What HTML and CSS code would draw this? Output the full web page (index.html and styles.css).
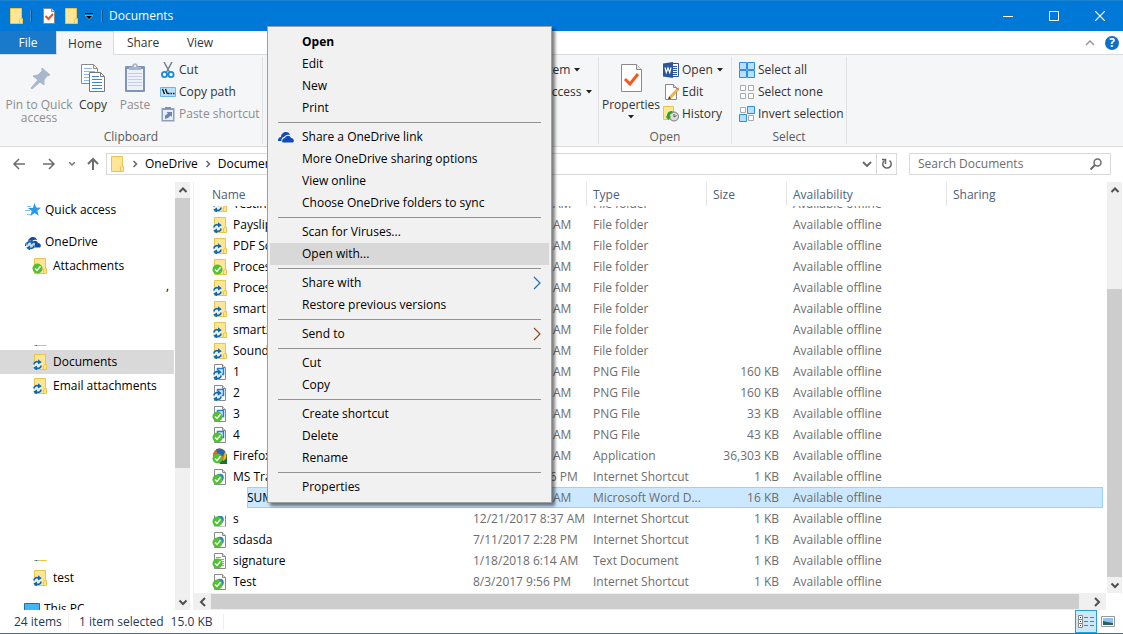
FILE: index.html
```
<!DOCTYPE html>
<html lang="en">
<head>
    <meta charset="UTF-8">
    <meta name="viewport" content="width=device-width, initial-scale=1.0">
    <title>Documents</title>
    <link rel="stylesheet" href="styles.css">
</head>
<body>
    <!-- Shared icons -->
    <svg class="sprite" aria-hidden="true">
        <symbol id="folder" viewBox="0 0 16 16">
            <path d="M2.5.5h11v10h1v5h-12z" fill="#ffe596" stroke="#ebc54b"/>
            <path d="M11.5 15.5v-4l2-1.5" fill="none" stroke="#ebc54b"/>
        </symbol>
        <symbol id="page" viewBox="0 0 16 16">
            <path d="M2.5.5h8l3 3v12h-11z" fill="#fff" stroke="#8a8a8a"/>
            <path d="M10.5.5v3h3" fill="#ddd" stroke="#8a8a8a"/>
        </symbol>
        <symbol id="sync" viewBox="0 0 16 16">
            <circle cx="5.500" cy="11" r="4.600" fill="#e9f2f8" opacity=".8"/>
            <path d="M2 10.500c0-2.500 2.500-3.500 4.500-2.500M9 11.500c0 2.500-2.500 3.500-4.500 2.500" fill="none" stroke="#1268ad" stroke-width="1.700"/>
            <path d="M6 5.300l3.800 2.900L6 10.600zM5 11.400v5.300L1.200 13.800z" fill="#1268ad"/>
        </symbol>
        <symbol id="check" viewBox="0 0 16 16">
            <circle cx="5.500" cy="10.500" r="5" fill="#4fc22f"/>
            <path d="M3 10.500l2 2 3.500-4.200" fill="none" stroke="#fff" stroke-width="1.500"/>
        </symbol>
        <symbol id="folder-sync" viewBox="0 0 16 16"><use href="#folder"/><use href="#sync"/></symbol>
        <symbol id="folder-check" viewBox="0 0 16 16"><use href="#folder"/><use href="#check"/></symbol>
        <symbol id="png" viewBox="0 0 16 16">
            <use href="#page"/>
            <path d="M5.500 4.500h6v6h-6z" fill="#d5ebfb" stroke="#1f7fd1" stroke-width="1.500"/>
        </symbol>
        <symbol id="png-sync" viewBox="0 0 16 16"><use href="#png"/><use href="#sync"/></symbol>
        <symbol id="png-check" viewBox="0 0 16 16"><use href="#png"/><use href="#check"/></symbol>
        <symbol id="url-check" viewBox="0 0 16 16">
            <use href="#page"/>
            <circle cx="8" cy="8.500" r="3.800" fill="#2d7fc8"/>
            <use href="#check"/>
        </symbol>
        <symbol id="txt-check" viewBox="0 0 16 16">
            <use href="#page"/>
            <path d="M4 4.500h5M4 6.500h8M4 8.500h8M4 10.500h8M4 12.500h8" stroke="#9a9a9a"/>
            <use href="#check"/>
        </symbol>
        <symbol id="firefox-check" viewBox="0 0 16 16">
            <path d="M1 7l14-1v10H8z" fill="#14723a"/>
            <circle cx="7.500" cy="7" r="6.500" fill="#e8641b"/>
            <path d="M4 1.500c3-2 8-1 9.500 2.500L11 8 6 7z" fill="#2468b0"/>
            <path d="M13 3c3 4 1 9-2 10l1-5z" fill="#f6b726"/>
            <use href="#check"/>
        </symbol>
        <symbol id="cloud" viewBox="0 0 16 12">
            <path d="M0 10C-.2 7.500 1.500 6 3 6 3 3 5.500 1 8 1c2 0 3.500 1 4 3-3-1-5 .3-6 2-2 .2-3 2-2.500 4z" fill="#0e4bb3"/>
            <path d="M4.500 11.500c-1-2 .3-4.500 2.500-4.500 1-3 5-3 6 0 3 0 3.500 3.500 2 4.500z" fill="#0e4bb3"/>
        </symbol>
        <symbol id="arrow" viewBox="0 0 8 8"><path d="M2.500 1l3 3-3 3" fill="none" stroke="#666" stroke-width="1.500"/></symbol>
        <symbol id="scroll-up" viewBox="0 0 16 16"><path d="M4.500 10L8 6.500l3.500 3.500" fill="none" stroke="#505050" stroke-width="2"/></symbol>
        <symbol id="scroll-down" viewBox="0 0 16 16"><path d="M4.500 6.500L8 10l3.500-3.500" fill="none" stroke="#505050" stroke-width="2"/></symbol>
        <symbol id="caret" viewBox="0 0 6 4"><path d="M0 0h6L3 3.500z" fill="#222"/></symbol>
    </svg>

    <header class="titlebar">
        <svg class="icon"><use href="#folder"/></svg>
        <span class="divider"></span>
        <button class="quick" aria-label="Properties">
            <svg class="icon" viewBox="0 0 16 16"><use href="#page"/><path d="M4.500 8l3 3 4.500-5" fill="none" stroke="#e8531a" stroke-width="2"/></svg>
        </button>
        <button class="quick" aria-label="New folder"><svg class="icon"><use href="#folder"/></svg></button>
        <button class="quick customize" aria-label="Customize toolbar">
            <svg width="8" height="7" viewBox="0 0 8 7"><path d="M0 .5h8" stroke="#000"/><path d="M0 2.500h8L4 6.500z" fill="#000" stroke="#fff" stroke-width=".5"/></svg>
        </button>
        <span class="divider"></span>
        <h1>Documents</h1>
        <div class="window-buttons">
            <button aria-label="Minimize"><svg width="10" height="10"><path d="M0 5.500h10" stroke="#fff"/></svg></button>
            <button aria-label="Maximize"><svg width="10" height="10"><path d="M.5.5h9v9h-9z" fill="none" stroke="#fff"/></svg></button>
            <button aria-label="Close"><svg width="10" height="10"><path d="M0 0l10 10M10 0L0 10" stroke="#fff" stroke-width="1.200"/></svg></button>
        </div>
    </header>

    <nav class="tabs">
        <button class="tab file">File</button>
        <button class="tab active">Home</button>
        <button class="tab share">Share</button>
        <button class="tab">View</button>
        <div class="help">
            <button aria-label="Collapse the ribbon"><svg width="10" height="6"><path d="M1 5l4-4 4 4" fill="none" stroke="#9a9a9a" stroke-width="1.500"/></svg></button>
            <button class="help-button" aria-label="Help">?</button>
        </div>
    </nav>

    <section class="ribbon">
        <div class="group clipboard">
            <div class="commands">
                <button class="big pin" disabled>
                    <svg width="32" height="32" viewBox="0 0 32 32"><path d="M19 6l8 7-3 1-3 4v5l-4-3-8 7-1-1 7-8-5-4 5-1 4-4z" fill="#a9b7cd" stroke="#a9b7cd"/></svg>
                    <span>Pin to Quick<br>access</span>
                </button>
                <button class="big">
                    <svg width="32" height="32" viewBox="0 0 32 32">
                        <path d="M4.500 2.500h12l4 4v15h-16z" fill="#fff" stroke="#8a8a8a"/>
                        <path d="M16.500 2.500v4h4" fill="none" stroke="#8a8a8a"/>
                        <path d="M7 6.500h8M7 9.500h11M7 12.500h8M7 15.500h8M7 18.500h8" stroke="#8cb6ef"/>
                        <path d="M12.500 10.500h11l4 4v15h-15z" fill="#fff" stroke="#777"/>
                        <path d="M23.500 10.500v4h4" fill="none" stroke="#777"/>
                        <path d="M15 14.500h7M15 17.500h10M15 20.500h10M15 23.500h10M15 26.500h10" stroke="#3c83e0"/>
                    </svg>
                    <span>Copy</span>
                </button>
                <button class="big" disabled>
                    <svg width="32" height="32" viewBox="0 0 32 32">
                        <rect x="6" y="4" width="20" height="26" rx="1" fill="#8094b8"/>
                        <path d="M8 7h16v21H8z" fill="#edf2fa"/>
                        <path d="M9 11.500h14M9 14.500h14M9 17.500h14M9 20.500h14M9 23.500h14" stroke="#c5cfe1"/>
                        <path d="M10 8V5h3c0-5 6-5 6 0h3v3z" fill="#a9b4c9"/><circle cx="16" cy="4" r="1" fill="#fff"/>
                    </svg>
                    <span>Paste</span>
                </button>
                <div class="column">
                    <button class="small">
                        <svg class="icon" viewBox="0 0 16 16">
                            <path d="M4 0l6 11M12 0L6 11" stroke="#73808c" stroke-width="1.500"/>
                            <circle cx="4.500" cy="12.500" r="2.600" fill="none" stroke="#1c8ad0" stroke-width="1.800"/>
                            <circle cx="11" cy="12.500" r="2.600" fill="none" stroke="#1c8ad0" stroke-width="1.800"/>
                        </svg>Cut
                    </button>
                    <button class="small">
                        <svg class="icon" viewBox="0 0 16 16">
                            <path d="M.5 3.500h15v9H.5z" fill="#b9e0fa" stroke="#6fb4e4"/>
                            <path d="M2.500 5l2 5M5.500 5l2 5" stroke="#111" stroke-width="1.300"/><path d="M8 9.500h1.500M10.500 9.500H12M13 9.500h1.500" stroke="#111" stroke-width="1.300"/>
                        </svg>Copy path
                    </button>
                    <button class="small" disabled>
                        <svg class="icon" viewBox="0 0 16 16">
                            <path d="M1.500 2h13v13.500h-13z" fill="#8ea0c0"/><path d="M3 4h10v10H3z" fill="#e6edf8"/>
                            <path d="M5 3V1h6v2z" fill="#7f90b0"/><path d="M5 13V9.500l3-2L6.500 6H12v5l-1.500-1.500L8 12z" fill="#6f84ad"/>
                        </svg>Paste shortcut
                    </button>
                </div>
            </div>
            <h2>Clipboard</h2>
        </div>
        <div class="group new">
            <div class="commands">
                <div class="column">
                    <button class="small">New item <svg class="caret"><use href="#caret"/></svg></button>
                    <button class="small">Easy access <svg class="caret"><use href="#caret"/></svg></button>
                </div>
            </div>
            <h2>New</h2>
        </div>
        <div class="group open">
            <div class="commands">
                <button class="big">
                    <svg width="32" height="32" viewBox="0 0 32 32">
                        <path d="M6.500 2.500h15l5 5v22h-20z" fill="#fff" stroke="#8a8a8a"/><path d="M21.500 2.500v5h5" fill="#e8e8e8" stroke="#8a8a8a"/>
                        <path d="M10 17l5 5 8-10" fill="none" stroke="#f1591d" stroke-width="3"/>
                    </svg>
                    <span>Properties</span>
                    <svg class="caret"><use href="#caret"/></svg>
                </button>
                <div class="column">
                    <button class="small">
                        <svg class="icon" viewBox="0 0 16 16">
                            <path d="M8.500 1.500h7v13h-7z" fill="#fff" stroke="#2b579a"/><path d="M10 4.500h4M10 6.500h4M10 8.500h4M10 10.500h4M10 12.500h4" stroke="#2b579a"/>
                            <path d="M0 1.500L10 0v16L0 14.500z" fill="#2b579a"/><path d="M2 5.500l1.300 5L5 6l1.700 4.500L8 5.500" fill="none" stroke="#fff" stroke-width="1.200"/>
                        </svg>Open <svg class="caret"><use href="#caret"/></svg>
                    </button>
                    <button class="small">
                        <svg class="icon" viewBox="0 0 16 16">
                            <use href="#page"/><path d="M6 13L14 4.500l1.500 1.500L8 14.500z" fill="#f4b93f" stroke="#d48a20" stroke-width=".5"/><path d="M6 12.500L5 15.500l3-1z" fill="#333"/><path d="M14 4.500l1-1L16 5l-.5 1z" fill="#d9534a"/>
                        </svg>Edit
                    </button>
                    <button class="small">
                        <svg class="icon" viewBox="0 0 16 16">
                            <path d="M.5.5h10v13H.5z" fill="#ffe596" stroke="#ebc54b"/><circle cx="11" cy="10.500" r="4.500" fill="#ddd" stroke="#777"/>
                            <path d="M11 8v3l2.500-1.500" fill="none" stroke="#555"/><path d="M9.500 6C6 6 5 8.500 5 11" fill="none" stroke="#29a329" stroke-width="2.500"/><path d="M2.500 10.500h5.500L5.500 14z" fill="#29a329"/>
                        </svg>History
                    </button>
                </div>
            </div>
            <h2>Open</h2>
        </div>
        <div class="group select">
            <div class="commands">
                <div class="column">
                    <button class="small">
                        <svg class="icon" viewBox="0 0 16 16"><path d="M.5.5h7v7h-7zM8.500.5h7v7h-7zM.5 8.500h7v7h-7zM8.500 8.500h7v7h-7z" fill="#b8dffa" stroke="#2d8fdd"/></svg>Select all
                    </button>
                    <button class="small">
                        <svg class="icon" viewBox="0 0 16 16"><path d="M1.500 1.500h5v5h-5zM9.500 1.500h5v5h-5zM1.500 9.500h5v5h-5zM9.500 9.500h5v5h-5z" fill="#fff" stroke="#aaa"/></svg>Select none
                    </button>
                    <button class="small">
                        <svg class="icon" viewBox="0 0 16 16"><path d="M1.500 1.500h5v5h-5zM9.500 9.500h5v5h-5z" fill="#fff" stroke="#aaa"/><path d="M8.500.5h7v7h-7zM.5 8.500h7v7h-7z" fill="#b8dffa" stroke="#2d8fdd"/></svg>Invert selection
                    </button>
                </div>
            </div>
            <h2>Select</h2>
        </div>
    </section>

    <section class="location">
        <div class="history">
            <button aria-label="Back"><svg width="14" height="12"><path d="M13 6H2M7 1L2 6l5 5" fill="none" stroke="#6d6d6d" stroke-width="1.500"/></svg></button>
            <button aria-label="Forward"><svg width="14" height="12"><path d="M1 6h11M7 1l5 5-5 5" fill="none" stroke="#6d6d6d" stroke-width="1.500"/></svg></button>
            <button aria-label="Recent locations"><svg width="6" height="4"><path d="M0 0l3 3 3-3" fill="none" stroke="#777" stroke-width="1.500"/></svg></button>
            <button aria-label="Up"><svg width="12" height="13"><path d="M6 13V2M1 7l5-5 5 5" fill="none" stroke="#6d6d6d" stroke-width="2"/></svg></button>
        </div>
        <div class="address">
            <svg class="icon"><use href="#folder"/></svg>
            <svg class="crumb"><use href="#arrow"/></svg>
            <a href="#">OneDrive</a>
            <svg class="crumb"><use href="#arrow"/></svg>
            <a href="#">Documents</a>
            <button class="previous" aria-label="Previous locations"><svg width="10" height="6"><path d="M1 1l4 4 4-4" fill="none" stroke="#6d6d6d" stroke-width="2"/></svg></button>
            <button class="refresh" aria-label="Refresh"><svg width="12" height="12" viewBox="0 0 12 12"><path d="M8.500 2.500a4.200 4.200 0 1 1-5 0" fill="none" stroke="#666" stroke-width="1.500"/><path d="M1 1.500h3.500V6" fill="none" stroke="#666" stroke-width="1.500"/></svg></button>
        </div>
        <label class="search">
            <input type="text" placeholder="Search Documents" aria-label="Search Documents">
            <svg width="12" height="12"><circle cx="7.500" cy="4.500" r="3.500" fill="none" stroke="#6d6d6d" stroke-width="1.500"/><path d="M5 7L.5 11.500" stroke="#6d6d6d" stroke-width="2"/></svg>
        </label>
    </section>

    <main class="content">
        <aside class="sidebar">
            <div class="tree">
                <a href="#" class="node"><svg class="icon" viewBox="0 0 16 16"><path d="M9.500 1l1.700 4.500 4.800.3-3.700 3 1.400 5-4.200-2.700L5.500 14l1.200-5-3.700-3h4.800z" fill="#2a9ae6"/><path d="M2 4.500h4M0 8.500h5M2 12.500h4" stroke="#7ec3f0"/></svg>Quick access</a>
                <a href="#" class="node onedrive"><svg class="icon" viewBox="0 0 16 16"><svg y="2" width="16" height="12"><use href="#cloud"/></svg><use href="#sync"/></svg>OneDrive</a>
                <a href="#" class="node child"><svg class="icon"><use href="#folder-check"/></svg>Attachments</a>
                <div class="blank upper"><span class="mark">,</span><svg class="icon"><use href="#folder-sync"/></svg></div>
                <a href="#" class="node child current"><svg class="icon"><use href="#folder-sync"/></svg>Documents</a>
                <a href="#" class="node child"><svg class="icon"><use href="#folder-sync"/></svg>Email attachments</a>
                <div class="blank lower"><svg class="icon"><use href="#folder-sync"/></svg></div>
                <a href="#" class="node child"><svg class="icon"><use href="#folder-sync"/></svg>test</a>
                <a href="#" class="node pc"><svg class="icon" viewBox="0 0 16 16"><path d="M.5 2.500h15v10H.5z" fill="#43b6f5" stroke="#2b6f9c"/><path d="M4 15.500h8" stroke="#777"/></svg>This PC</a>
            </div>
            <div class="scrollbar">
                <svg class="icon"><use href="#scroll-up"/></svg>
                <div class="thumb tree-thumb"></div>
                <svg class="icon end"><use href="#scroll-down"/></svg>
            </div>
        </aside>

        <section class="files">
            <div class="list">
                <table>
                    <thead>
                        <tr><th>Name</th><th>Date modified</th><th>Type</th><th>Size</th><th>Availability</th><th>Sharing</th></tr>
                    </thead>
                    <tbody>
                        <tr><td><svg class="icon"><use href="#folder-sync"/></svg>Testing</td><td>8/3/2017 9:56 AM</td><td>File folder</td><td></td><td>Available offline</td><td></td></tr>
                        <tr><td><svg class="icon"><use href="#folder-sync"/></svg>Payslips</td><td>8/3/2017 9:56 AM</td><td>File folder</td><td></td><td>Available offline</td><td></td></tr>
                        <tr><td><svg class="icon"><use href="#folder-sync"/></svg>PDF Scans</td><td>8/3/2017 9:56 AM</td><td>File folder</td><td></td><td>Available offline</td><td></td></tr>
                        <tr><td><svg class="icon"><use href="#folder-check"/></svg>Process</td><td>8/3/2017 9:56 AM</td><td>File folder</td><td></td><td>Available offline</td><td></td></tr>
                        <tr><td><svg class="icon"><use href="#folder-sync"/></svg>Processes</td><td>8/3/2017 9:56 AM</td><td>File folder</td><td></td><td>Available offline</td><td></td></tr>
                        <tr><td><svg class="icon"><use href="#folder-sync"/></svg>smart1</td><td>8/3/2017 9:56 AM</td><td>File folder</td><td></td><td>Available offline</td><td></td></tr>
                        <tr><td><svg class="icon"><use href="#folder-sync"/></svg>smart2</td><td>8/3/2017 9:56 AM</td><td>File folder</td><td></td><td>Available offline</td><td></td></tr>
                        <tr><td><svg class="icon"><use href="#folder-sync"/></svg>Sounds</td><td>8/3/2017 9:56 AM</td><td>File folder</td><td></td><td>Available offline</td><td></td></tr>
                        <tr><td><svg class="icon"><use href="#png-sync"/></svg>1</td><td>8/3/2017 9:56 AM</td><td>PNG File</td><td>160 KB</td><td>Available offline</td><td></td></tr>
                        <tr><td><svg class="icon"><use href="#png-sync"/></svg>2</td><td>8/3/2017 9:56 AM</td><td>PNG File</td><td>160 KB</td><td>Available offline</td><td></td></tr>
                        <tr><td><svg class="icon"><use href="#png-check"/></svg>3</td><td>8/3/2017 9:56 AM</td><td>PNG File</td><td>33 KB</td><td>Available offline</td><td></td></tr>
                        <tr><td><svg class="icon"><use href="#png-check"/></svg>4</td><td>8/3/2017 9:56 AM</td><td>PNG File</td><td>43 KB</td><td>Available offline</td><td></td></tr>
                        <tr><td><svg class="icon"><use href="#firefox-check"/></svg>Firefox</td><td>8/3/2017 9:56 AM</td><td>Application</td><td>36,303 KB</td><td>Available offline</td><td></td></tr>
                        <tr><td><svg class="icon"><use href="#url-check"/></svg>MS Training</td><td>7/11/2017 2:26 PM</td><td>Internet Shortcut</td><td>1 KB</td><td>Available offline</td><td></td></tr>
                        <tr class="selected"><td>SUMMARY</td><td>8/3/2017 9:56 AM</td><td>Microsoft Word D...</td><td>16 KB</td><td>Available offline</td><td></td></tr>
                        <tr><td><svg class="icon cut"><use href="#url-check"/></svg>s</td><td>12/21/2017 8:37 AM</td><td>Internet Shortcut</td><td>1 KB</td><td>Available offline</td><td></td></tr>
                        <tr><td><svg class="icon"><use href="#url-check"/></svg>sdasda</td><td>7/11/2017 2:28 PM</td><td>Internet Shortcut</td><td>1 KB</td><td>Available offline</td><td></td></tr>
                        <tr><td><svg class="icon"><use href="#txt-check"/></svg>signature</td><td>1/18/2018 6:14 AM</td><td>Text Document</td><td>1 KB</td><td>Available offline</td><td></td></tr>
                        <tr><td><svg class="icon"><use href="#url-check"/></svg>Test</td><td>8/3/2017 9:56 PM</td><td>Internet Shortcut</td><td>1 KB</td><td>Available offline</td><td></td></tr>
                    </tbody>
                </table>
                <div class="scrollbar">
                    <svg class="icon"><use href="#scroll-up"/></svg>
                    <div class="thumb list-thumb"></div>
                    <svg class="icon"><use href="#scroll-down"/></svg>
                </div>
            </div>
            <div class="scrollbar-x">
                <svg class="icon" viewBox="0 0 16 16"><path d="M10 4L6 8l4 4" fill="none" stroke="#505050" stroke-width="2"/></svg>
                <div class="thumb"></div>
                <svg class="icon" viewBox="0 0 16 16"><path d="M6 4l4 4-4 4" fill="none" stroke="#505050" stroke-width="2"/></svg>
            </div>
        </section>
    </main>

    <footer class="status">
        <span class="count">24 items</span>
        <span class="selection">1 item selected</span>
        <span class="size">15.0 KB</span>
        <div class="views">
            <button class="on" aria-label="Details"><svg width="17" height="14"><path d="M.5.5h4v4h-4zM.5 4.500h4v4h-4zM.5 8.500h4v4h-4z" fill="#fff" stroke="#888"/><path d="M2 2.500h1M2 6.500h1M2 10.500h1" stroke="#333"/><path d="M6 2.500h4M12 2.500h4M6 6.500h4M12 6.500h4M6 10.500h4M12 10.500h4" stroke="#777"/></svg></button>
            <button aria-label="Large thumbnails"><svg width="14" height="11"><path d="M.5.500h13v10H.5z" fill="#fff" stroke="#999"/><path d="M2 2h10v7H2z" fill="#8fc4f5"/><path d="M2 5l4 1 6 1v2H2z" fill="#2f5e62"/></svg></button>
        </div>
    </footer>

    <div class="menu" role="menu">
        <button role="menuitem" class="default">Open</button>
        <button role="menuitem">Edit</button>
        <button role="menuitem">New</button>
        <button role="menuitem">Print</button>
        <hr>
        <button role="menuitem" class="with-icon"><svg width="16" height="12"><use href="#cloud"/></svg>Share a OneDrive link</button>
        <button role="menuitem">More OneDrive sharing options</button>
        <button role="menuitem">View online</button>
        <button role="menuitem">Choose OneDrive folders to sync</button>
        <hr>
        <button role="menuitem">Scan for Viruses...</button>
        <button role="menuitem" class="hover">Open with...</button>
        <hr>
        <button role="menuitem">Share with<svg class="sub" viewBox="0 0 8 14"><path d="M1 1l6 6-6 6" fill="none" stroke="#1d6fb8" stroke-width="1.200"/></svg></button>
        <button role="menuitem">Restore previous versions</button>
        <hr>
        <button role="menuitem">Send to<svg class="sub" viewBox="0 0 8 14"><path d="M1 1l6 6-6 6" fill="none" stroke="#9a4a1c" stroke-width="1.200"/></svg></button>
        <hr>
        <button role="menuitem">Cut</button>
        <button role="menuitem">Copy</button>
        <hr>
        <button role="menuitem">Create shortcut</button>
        <button role="menuitem">Delete</button>
        <button role="menuitem">Rename</button>
        <hr>
        <button role="menuitem">Properties</button>
    </div>
</body>
</html>
```
FILE: styles.css
```
* {
    box-sizing: border-box;
}

body {
    margin: 0;
    height: 100vh;
    display: flex;
    flex-direction: column;
    overflow: hidden;
    position: relative;
    background: #fff;
    color: #000;
    font-family: "Open Sans", "Noto Sans", sans-serif;
    font-size: 12px;
    line-height: 16px;
    border-bottom: 1px solid #1979ca;
}

button, input {
    font: inherit;
    color: inherit;
    background: none;
    border: 0;
    padding: 0;
    margin: 0;
}

a {
    color: inherit;
    text-decoration: none;
}

h1, h2 {
    margin: 0;
    font-size: 12px;
    font-weight: normal;
}

svg {
    display: block;
    flex-shrink: 0;
}

.sprite {
    position: absolute;
    width: 0;
    height: 0;
}

.icon {
    width: 16px;
    height: 16px;
}

.caret {
    width: 6px;
    height: 4px;
}

/* Title bar */
.titlebar {
    height: 31px;
    display: flex;
    align-items: center;
    padding-left: 8px;
    background: #0078d7;
    border-top: 1px solid #1881d2;
    color: #fff;
}

.titlebar .divider {
    width: 2px;
    height: 12px;
    margin-left: 6px;
    border-left: 1px solid #4d8fc4;
    border-right: 1px solid #14568f;
}

.titlebar .quick {
    margin-left: 9px;
}

.titlebar .quick + .quick {
    margin-left: 6px;
}

.titlebar .customize + .divider {
    margin-left: 8px;
}

.titlebar h1 {
    margin-left: 6px;
}

.window-buttons {
    display: flex;
    align-self: stretch;
    margin-left: auto;
}

.window-buttons button {
    width: 46px;
    display: grid;
    place-items: center;
}

/* Ribbon tabs */
.tabs {
    height: 24px;
    display: flex;
    border-bottom: 1px solid #dadbdc;
    color: #333;
}

.tab {
    width: 56px;
}

.tab.file {
    background: #1979ca;
    color: #fff;
}

.tab.active {
    width: 58px;
    height: 24px;
    background: #f5f6f7;
    border: 1px solid #dadbdc;
    border-bottom: 0;
}

.tab.share {
    width: 58px;
}

.help {
    display: flex;
    align-items: center;
    gap: 10px;
    margin-left: auto;
    padding-right: 4px;
}

.help-button {
    width: 14px;
    height: 14px;
    border-radius: 50%;
    background: #0f6fc6;
    color: #fff;
    font-weight: bold;
    line-height: 14px;
}

/* Ribbon */
.ribbon {
    height: 92px;
    display: flex;
    background: #f5f6f7;
    border-bottom: 1px solid #dadbdc;
    color: #333;
}

.group {
    display: flex;
    flex-direction: column;
    margin: 2px 0;
    border-right: 1px solid #e2e3e4;
}

.group h2 {
    height: 15px;
    margin-top: auto;
    text-align: center;
    color: #5a5a5a;
}

.clipboard {
    width: 263px;
}

.new {
    width: 336px;
}

.new .commands {
    padding-left: 254px;
}

.open {
    width: 133px;
}

.select {
    width: 115px;
}

.commands {
    display: flex;
    height: 70px;
}

.column {
    display: flex;
    flex-direction: column;
    padding-top: 2px;
}

.small {
    height: 22px;
    display: flex;
    align-items: center;
    gap: 3px;
    white-space: nowrap;
}

.small .caret {
    margin-left: 1px;
}

.select .column {
    padding-left: 7px;
}

.ribbon button:disabled {
    color: #8d8d8d;
}

.big {
    display: flex;
    flex-direction: column;
    align-items: center;
    padding-top: 5px;
    width: 42px;
    line-height: 13px;
}

.big span {
    margin-top: 4px;
    white-space: nowrap;
}

.big .caret {
    margin-top: 4px;
}

.big.pin {
    width: 66px;
    margin-left: 6px;
}

.clipboard .column {
    padding-left: 4px;
}

.open .big {
    width: 64px;
}

/* Address row */
.location {
    display: flex;
    align-items: center;
    height: 35px;
    padding: 0 12px 2px 12px;
}

.history {
    display: flex;
    align-items: center;
    gap: 16px;
    width: 94px;
}

.history button:nth-child(3) {
    margin-left: -3px;
    margin-right: -4px;
}

.address {
    flex: 1;
    display: flex;
    align-items: center;
    height: 22px;
    border: 1px solid #d9d9d9;
    padding-left: 2px;
}

.crumb {
    width: 8px;
    height: 8px;
    margin: 0 6px;
}

.previous {
    margin-left: auto;
}

.refresh {
    display: grid;
    place-items: center;
    width: 20px;
    height: 20px;
    margin-left: 4px;
    border-left: 1px solid #d9d9d9;
}

.search {
    display: flex;
    align-items: center;
    width: 202px;
    height: 22px;
    margin-left: 12px;
    padding: 0 8px;
    border: 1px solid #d9d9d9;
}

.search input {
    flex: 1;
    min-width: 0;
    outline: 0;
}

.search input::placeholder {
    color: #6d6d6d;
    opacity: 1;
}

/* Folders and files */
.content {
    flex: 1;
    min-height: 0;
    display: flex;
}

.sidebar {
    width: 194px;
    display: flex;
    border-right: 1px solid #f0f0f0;
}

.tree {
    flex: 1;
    overflow: hidden;
    padding-top: 16px;
}

.node {
    display: flex;
    align-items: center;
    gap: 4px;
    height: 24px;
    padding-left: 25px;
}

.node.onedrive {
    margin-top: 8px;
}

.node.child {
    padding-left: 32px;
    gap: 5px;
}

.node.current {
    margin-right: 1px;
    background: #d9d9d9;
}

.node.pc {
    margin-top: 7px;
    padding-left: 24px;
}

.blank {
    display: flex;
    flex-direction: column;
    padding-left: 32px;
}

.blank .icon {
    clip-path: inset(15px 0 0);
}

.blank.upper {
    height: 72px;
    padding-bottom: 4px;
    justify-content: space-between;
}

.blank.lower {
    height: 168px;
    padding-bottom: 5px;
    justify-content: flex-end;
}

.mark {
    align-self: flex-end;
    padding-right: 6px;
}

.scrollbar {
    width: 15px;
    margin-right: 3px;
    display: flex;
    flex-direction: column;
    align-items: center;
    background: #f0f0f0;
}

.scrollbar .end {
    margin-top: auto;
}

.thumb {
    width: 15px;
    background: #cdcdcd;
}

.tree-thumb {
    height: 270px;
}

.list-thumb {
    height: 288px;
    margin-top: auto;
}

.files {
    flex: 1;
    min-width: 0;
    display: flex;
    flex-direction: column;
}

.list {
    flex: 1;
    min-height: 0;
    display: flex;
    overflow: hidden;
}

.list .scrollbar {
    margin-right: 1px;
}

table {
    flex: 1;
    display: flex;
    flex-direction: column;
    padding: 0 4px 0 12px;
}

thead, tbody {
    display: block;
}

thead {
    position: relative;
    z-index: 1;
    background: #fff;
}

/* the list is scrolled part of a row down */
tbody {
    margin-top: -13px;
    color: #6d6d6d;
}

tr {
    display: grid;
    grid-template-columns: 261px 120px 120px 80px 160px 1fr;
    height: 21px;
}

thead tr {
    height: 24px;
}

th {
    padding: 5px 6px 3px;
    border-right: 1px solid #e5e5e5;
    text-align: left;
    font-weight: normal;
    color: #4c607a;
}

th:last-child {
    border-right: 0;
}

td {
    display: flex;
    align-items: center;
    gap: 5px;
    padding: 0 6px;
    white-space: nowrap;
}

td:first-child {
    color: #000;
}

td:nth-child(4) {
    justify-content: flex-end;
    padding-right: 8px;
}

.selected {
    grid-template-columns: 220px 120px 120px 80px 160px 1fr;
    margin-left: 41px;
    background: #cce8ff;
    outline: 1px solid #99d1ff;
    outline-offset: -1px;
}

.selected td:first-child {
    padding-left: 0;
}

.icon.cut {
    clip-path: inset(5px 0 0);
}

.scrollbar-x {
    display: flex;
    align-items: center;
    height: 17px;
    margin-right: 17px;
    padding: 0 1px;
    background: #f0f0f0;
}

.scrollbar-x .thumb {
    flex: 1;
    height: 15px;
    margin-right: 10px;
}

/* Status bar */
.status {
    height: 23px;
    display: flex;
    align-items: center;
    padding-left: 14px;
    color: #1e395b;
}

.status .count {
    width: 55px;
    border-right: 1px solid #eee;
}

.status .selection {
    margin-left: 10px;
}

.status .size {
    margin-left: 7px;
    padding-right: 10px;
    border-right: 1px solid #eee;
}

.views {
    display: flex;
    align-self: stretch;
    margin-left: auto;
    padding-right: 4px;
}

.views button {
    width: 22px;
    display: grid;
    place-items: center;
}

.views .on {
    background: #cce8f8;
    border: 1px solid #26a0da;
}

/* Context menu */
.menu {
    position: absolute;
    z-index: 2;
    top: 26px;
    left: 267px;
    width: 285px;
    padding: 4px 2px;
    background: #f1f1f1;
    border: 1px solid #a0a0a0;
    box-shadow: 3px 3px 3px rgba(0, 0, 0, 0.5);
}

.menu button {
    width: 100%;
    height: 22px;
    display: flex;
    align-items: center;
    padding: 0 8px 0 32px;
    white-space: nowrap;
}

.menu .default {
    font-weight: bold;
}

.menu .with-icon {
    gap: 8px;
    padding-left: 8px;
}

.menu .hover {
    background: #d8d8d8;
}

.menu .sub {
    width: 8px;
    height: 14px;
    margin-left: auto;
}

.menu hr {
    height: 1px;
    margin: 3px 8px;
    border: 0;
    background: #919191;
}
```
